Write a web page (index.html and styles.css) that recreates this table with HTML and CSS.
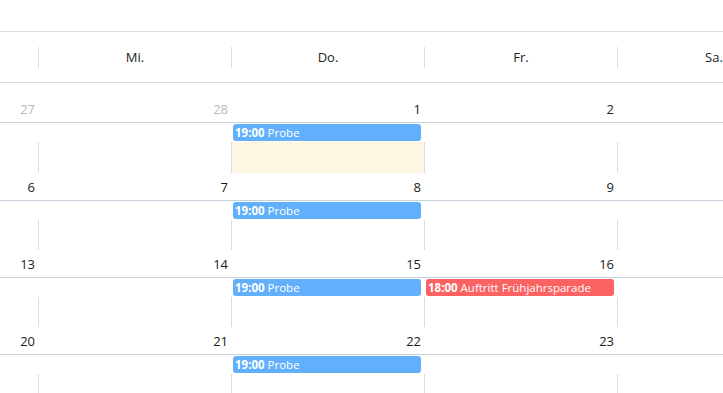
FILE: index.html
```html
<!DOCTYPE html>
<html lang="de">
<head>
<meta charset="utf-8">
<link rel="stylesheet" href="styles.css">
</head>
<body>
<div class="cal">
  <div class="head">
    <div class="hcell"><span>Di.</span></div>
    <div class="hcell sep"><span>Mi.</span></div>
    <div class="hcell sep"><span>Do.</span></div>
    <div class="hcell sep"><span>Fr.</span></div>
    <div class="hcell sep"><span>Sa.</span></div>
  </div>
  <div class="weeks">
    <div class="week first">
      <div class="nums">
        <div class="num other">27</div><div class="num other">28</div><div class="num">1</div><div class="num">2</div><div class="num">3</div>
      </div>
      <div class="evrow">
        <div class="ev blue c3"><b>19:00</b> Probe</div>
      </div>
      <div class="fill">
        <div class="fc"></div><div class="fc sep"></div><div class="fc sep today"></div><div class="fc sep"></div><div class="fc sep"></div>
      </div>
    </div>
    <div class="week">
      <div class="nums">
        <div class="num">6</div><div class="num">7</div><div class="num">8</div><div class="num">9</div><div class="num">10</div>
      </div>
      <div class="evrow">
        <div class="ev blue c3"><b>19:00</b> Probe</div>
      </div>
      <div class="fill">
        <div class="fc"></div><div class="fc sep"></div><div class="fc sep"></div><div class="fc sep"></div><div class="fc sep"></div>
      </div>
    </div>
    <div class="week">
      <div class="nums">
        <div class="num">13</div><div class="num">14</div><div class="num">15</div><div class="num">16</div><div class="num">17</div>
      </div>
      <div class="evrow">
        <div class="ev blue c3"><b>19:00</b> Probe</div>
        <div class="ev red c4"><b>18:00</b> Auftritt Frühjahrsparade</div>
      </div>
      <div class="fill">
        <div class="fc"></div><div class="fc sep"></div><div class="fc sep"></div><div class="fc sep"></div><div class="fc sep"></div>
      </div>
    </div>
    <div class="week">
      <div class="nums">
        <div class="num">20</div><div class="num">21</div><div class="num">22</div><div class="num">23</div><div class="num">24</div>
      </div>
      <div class="evrow">
        <div class="ev blue c3"><b>19:00</b> Probe</div>
      </div>
      <div class="fill">
        <div class="fc"></div><div class="fc sep"></div><div class="fc sep"></div><div class="fc sep"></div><div class="fc sep"></div>
      </div>
    </div>
  </div>
</div>
</body>
</html>
```
FILE: styles.css
```css
html, body {
  margin: 0;
  padding: 0;
  background: #fff;
  overflow: hidden;
  height: 393px;
}
body {
  padding-top: 31px;
  font-family: "Open Sans", "DejaVu Sans", sans-serif;
  color: #333;
}
.cal {
  width: 965px;
  margin-left: -155px;
}
.head {
  display: grid;
  grid-template-columns: repeat(5, 193px);
  height: 50px;
  border-top: 1px solid #dcdcdc;
  border-bottom: 1px solid #dcdcdc;
  align-items: center;
}
.hcell {
  height: 21px;
  display: flex;
  align-items: center;
  justify-content: center;
  font-size: 13px;
  color: #1c1c1c;
}
.hcell.sep {
  border-left: 1px solid #dcdcdc;
}
.weeks {
  padding-top: 12px;
}
.nums {
  display: grid;
  grid-template-columns: repeat(5, 193px);
  height: 27px;
  border-bottom: 1px solid #c6d3de;
}
.num {
  text-align: right;
  padding-right: 3px;
  font-size: 13px;
  line-height: 28px;
  color: #1c1c1c;
}
.num.other {
  color: #b8b8b8;
}
.evrow {
  display: grid;
  grid-template-columns: repeat(5, 193px);
  height: 19px;
}
.ev {
  grid-row: 1;
  margin: 1px 3px 0 2px;
  height: 17px;
  border-radius: 3px;
  color: #fff;
  font-size: 11.5px;
  line-height: 18px;
  padding-left: 2px;
  white-space: nowrap;
  overflow: hidden;
}
.ev b {
  font-weight: 700;
}
.ev.blue { background: #62b0fb; }
.ev.red { background: #fb6262; }
.c3 { grid-column: 3; }
.c4 { grid-column: 4; }
.fill {
  display: grid;
  grid-template-columns: repeat(5, 193px);
  height: 31px;
}
.week:not(.first) .fill {
  height: 30px;
}
.fc.sep {
  border-left: 1px solid #dcdcdc;
}
.fc.today {
  background: #fcf6e3;
  border-right: 1px solid #dcdcdc;
  margin-right: -1px;
}
```
